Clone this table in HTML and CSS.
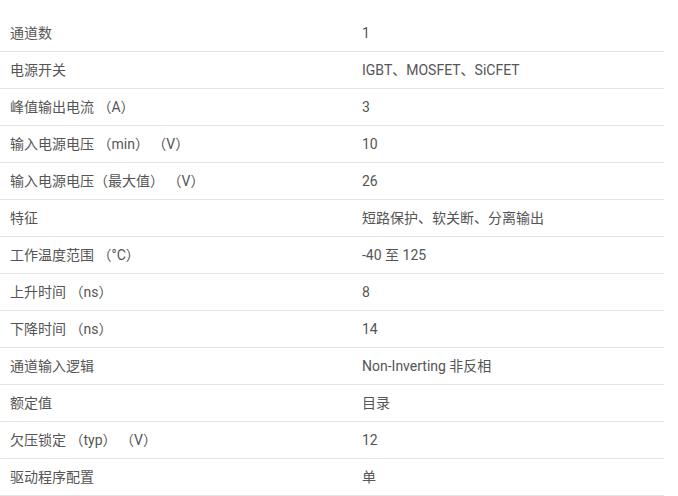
FILE: index.html
```html
<!DOCTYPE html>
<html lang="zh-CN">
<head>
<meta charset="utf-8">
<link rel="stylesheet" href="styles.css">
</head>
<body>
<table class="params">
<tbody>
<tr><td>通道数</td><td>1</td></tr>
<tr><td>电源开关</td><td>IGBT、MOSFET、SiCFET</td></tr>
<tr><td>峰值输出电流 （A）</td><td>3</td></tr>
<tr><td>输入电源电压 （min） （V）</td><td>10</td></tr>
<tr><td>输入电源电压（最大值） （V）</td><td>26</td></tr>
<tr><td>特征</td><td>短路保护、软关断、分离输出</td></tr>
<tr><td>工作温度范围 （°C）</td><td>-40 至 125</td></tr>
<tr><td>上升时间 （ns）</td><td>8</td></tr>
<tr><td>下降时间 （ns）</td><td>14</td></tr>
<tr><td>通道输入逻辑</td><td>Non-Inverting 非反相</td></tr>
<tr><td>额定值</td><td>目录</td></tr>
<tr><td>欠压锁定 （typ） （V）</td><td>12</td></tr>
<tr><td>驱动程序配置</td><td>单</td></tr>
</tbody>
</table>
</body>
</html>
```
FILE: styles.css
```css
html, body {
  margin: 0;
  padding: 0;
  background: #fff;
}
body {
  padding-top: 15px;
  font-family: Roboto, "Noto Sans CJK SC", sans-serif;
  font-size: 14px;
  color: #555;
}
.params {
  width: 664px;
  border-collapse: collapse;
  table-layout: fixed;
}
.params td {
  height: 36px;
  padding: 0 10px;
  border-bottom: 1px solid #e4e4e4;
  vertical-align: middle;
  line-height: 20px;
}
.params td:first-child {
  width: 332px;
}
```
